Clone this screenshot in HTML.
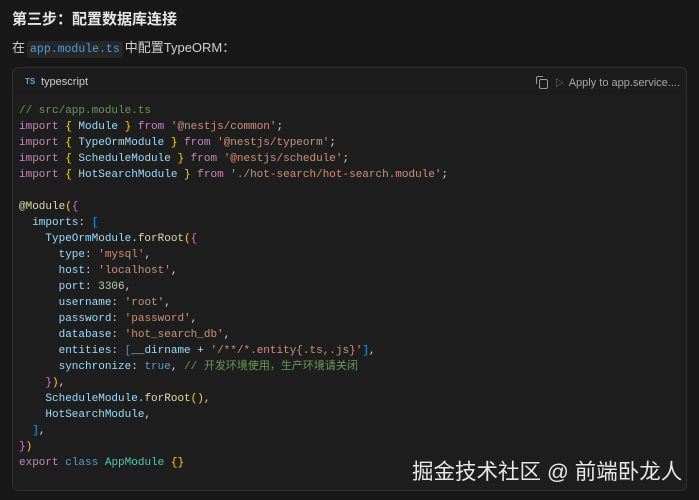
<!DOCTYPE html>
<html><head><meta charset="utf-8"><style>
body{margin:0;background:#181818;width:699px;height:500px;overflow:hidden;font-family:"Liberation Sans","Noto Sans CJK SC",sans-serif;color:#d4d4d4;position:relative}
h3{position:absolute;left:12px;top:10px;margin:0;font-size:15px;font-weight:bold;color:#e6e6e6;line-height:20px}
.p{position:absolute;left:12px;top:38px;font-size:13px;color:#d0d0d0;line-height:20px}
.ic{font-family:"Liberation Mono",monospace;font-size:11.5px;color:#4c9fe0;background:#262626;padding:2px 3px;border-radius:3px;margin:0 2px}
.box{position:absolute;left:12px;top:67px;width:673px;height:422px;border:1px solid #303030;border-radius:6px;background:#1c1c1c;overflow:hidden}
.hd{height:27px;position:relative;font-size:11px;color:#cfcfcf}
.hd .ts{position:absolute;left:12px;top:9px;font-size:8px;font-weight:bold;color:#5aa7d6}
.hd .lang{position:absolute;left:28px;top:8px}
.hd .ap{position:absolute;right:6px;top:9px;color:#a8a8a8;font-size:11px}
.cp{position:absolute;right:138px;top:11px;width:7px;height:8px;border:1.3px solid #999;border-radius:2px}
.cp:after{content:"";position:absolute;left:-4px;top:-4px;width:6px;height:7px;border-left:1.3px solid #999;border-top:1.3px solid #999;border-radius:2px 0 0 0}
.tri{position:absolute;right:122px;top:8px;color:#888;font-size:9px}
pre{margin:0;background:#1e1e1e;height:395px;padding:8px 0 0 6px;font-family:"Liberation Mono","Noto Sans CJK SC",monospace;font-size:11px;line-height:16px;color:#9cdcfe}
.k{color:#c586c0}.b{color:#ffd700}.s{color:#ce9178}.c{color:#6a9955}.n{color:#b5cea8}.t{color:#4ec9b0}.bl{color:#569cd6}.f{color:#dcdcaa}.pu{color:#da70d6}.sb{color:#179fff}.w{color:#d4d4d4}
.wm{position:absolute;left:412px;top:455px;font-size:21.5px;color:#e8e8e8;font-family:"Liberation Sans","Noto Sans CJK SC",sans-serif;white-space:nowrap}
</style></head><body>
<h3>第三步：配置数据库连接</h3>
<div class="p">在<span class="ic">app.module.ts</span>中配置TypeORM：</div>
<div class="box">
<div class="hd"><span class="ts">TS</span><span class="lang">typescript</span><span class="cp"></span><span class="tri">▷</span><span class="ap">Apply to app.service....</span></div>
<pre><span class="c">// src/app.module.ts</span>
<span class="k">import</span> <span class="b">{</span> Module <span class="b">}</span> <span class="k">from</span> <span class="s">'@nestjs/common'</span><span class="w">;</span>
<span class="k">import</span> <span class="b">{</span> TypeOrmModule <span class="b">}</span> <span class="k">from</span> <span class="s">'@nestjs/typeorm'</span><span class="w">;</span>
<span class="k">import</span> <span class="b">{</span> ScheduleModule <span class="b">}</span> <span class="k">from</span> <span class="s">'@nestjs/schedule'</span><span class="w">;</span>
<span class="k">import</span> <span class="b">{</span> HotSearchModule <span class="b">}</span> <span class="k">from</span> <span class="s">'./hot-search/hot-search.module'</span><span class="w">;</span>

<span class="f">@Module</span><span class="b">(</span><span class="pu">{</span>
  imports<span class="w">:</span> <span class="sb">[</span>
    TypeOrmModule<span class="w">.</span><span class="f">forRoot</span><span class="b">(</span><span class="pu">{</span>
      type<span class="w">:</span> <span class="s">'mysql'</span><span class="w">,</span>
      host<span class="w">:</span> <span class="s">'localhost'</span><span class="w">,</span>
      port<span class="w">:</span> <span class="n">3306</span><span class="w">,</span>
      username<span class="w">:</span> <span class="s">'root'</span><span class="w">,</span>
      password<span class="w">:</span> <span class="s">'password'</span><span class="w">,</span>
      database<span class="w">:</span> <span class="s">'hot_search_db'</span><span class="w">,</span>
      entities<span class="w">:</span> <span class="sb">[</span>__dirname <span class="w">+</span> <span class="s">'/**/*.entity{.ts,.js}'</span><span class="sb">]</span><span class="w">,</span>
      synchronize<span class="w">:</span> <span class="bl">true</span><span class="w">,</span> <span class="c">// 开发环境使用，生产环境请关闭</span>
    <span class="pu">}</span><span class="b">)</span><span class="w">,</span>
    ScheduleModule<span class="w">.</span><span class="f">forRoot</span><span class="b">()</span><span class="w">,</span>
    HotSearchModule<span class="w">,</span>
  <span class="sb">]</span><span class="w">,</span>
<span class="pu">}</span><span class="b">)</span>
<span class="k">export</span> <span class="bl">class</span> <span class="t">AppModule</span> <span class="b">{}</span></pre>
</div>
<div class="wm">掘金技术社区 @ 前端卧龙人</div>
</body></html>
